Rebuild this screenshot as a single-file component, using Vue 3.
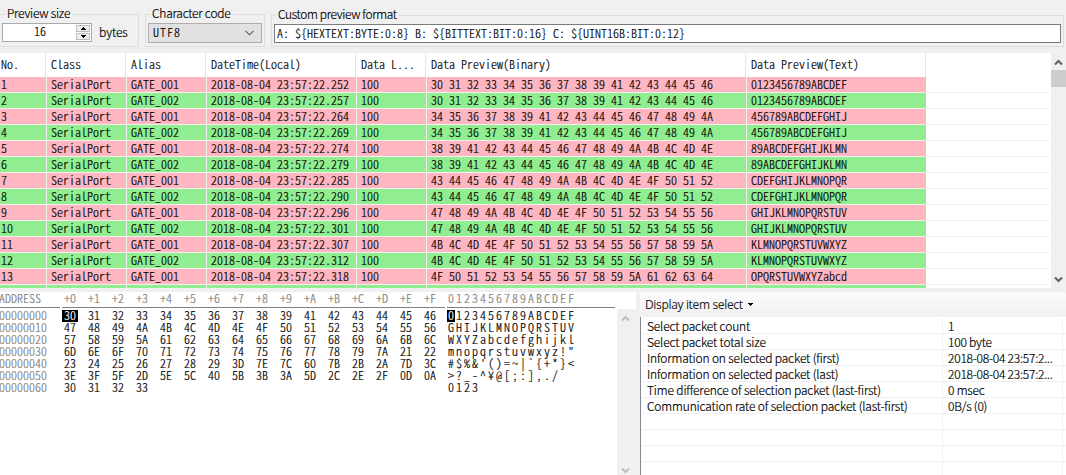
<script setup>
const CHARS = '0123456789ABCDEFGHIJKLMNOPQRSTUVWXYZabcdefghijklmnopqrstuvwxyz'
const hex = (s) => [...s].map((c) => c.charCodeAt(0).toString(16).toUpperCase()).join(' ')
const millis = ['252', '257', '264', '269', '274', '279', '285', '290', '296', '301', '307', '312', '318']
const rows = millis.map((ms, i) => {
  const start = Math.floor(i / 2) * 4
  const text = CHARS.slice(start, start + 16)
  return [String(i + 1), 'SerialPort', i % 2 ? 'GATE_002' : 'GATE_001', `2018-08-04 23:57:22.${ms}`, '100', hex(text), text]
})
const headers = ['No.', 'Class', 'Alias', 'DateTime(Local)', 'Data L...', 'Data Preview(Binary)', 'Data Preview(Text)']
const offsets = [...'0123456789ABCDEF'].map((c) => '+' + c)
const dump = [
  ['30 31 32 33 34 35 36 37 38 39 41 42 43 44 45 46', '0123456789ABCDEF'],
  ['47 48 49 4A 4B 4C 4D 4E 4F 50 51 52 53 54 55 56', 'GHIJKLMNOPQRSTUV'],
  ['57 58 59 5A 61 62 63 64 65 66 67 68 69 6A 6B 6C', 'WXYZabcdefghijkl'],
  ['6D 6E 6F 70 71 72 73 74 75 76 77 78 79 7A 21 22', 'mnopqrstuvwxyz!"'],
  ['23 24 25 26 27 28 29 3D 7E 7C 60 7B 2B 2A 7D 3C', "#$%&'()=~|`{+*}<"],
  ['3E 3F 5F 2D 5E 5C 40 5B 3B 3A 5D 2C 2E 2F 0D 0A', '>?_-^¥@[;:],./'],
  ['30 31 32 33', '0123'],
].map(([bytes, text], i) => ({ address: `000000${i}0`, bytes: bytes.split(' '), text: [...text] }))
const info = [
  ['Select packet count', '1'],
  ['Select packet total size', '100 byte'],
  ['Information on selected packet (first)', '2018-08-04 23:57:2...'],
  ['Information on selected packet (last)', '2018-08-04 23:57:2...'],
  ['Time difference of selection packet (last-first)', '0 msec'],
  ['Communication rate of selection packet (last-first)', '0B/s (0)'],
  ['', ''], ['', ''], ['', ''], ['', ''],
]
</script>

<template>
  <div class="window">
    <header class="options">
      <section class="group size">
        <span class="legend">Preview size</span>
        <div class="controls">
          <div class="spinner">
            <span class="value mono">16</span>
            <div class="buttons">
              <i><svg width="5" height="3"><path d="M2 0h1v1h1v1h1v1H0V2h1V1h1z" /></svg></i>
              <i><svg width="5" height="3"><path d="M0 0h5v1H4v1H3v1H2V2H1V1H0z" /></svg></i>
            </div>
          </div>
          <span class="unit">bytes</span>
        </div>
      </section>
      <section class="group code">
        <span class="legend">Character code</span>
        <div class="combo mono">
          <span>UTF8</span>
          <svg width="9" height="6"><path d="M.5 .8l4 4 4-4" fill="none" stroke="#555" stroke-width="1.1" /></svg>
        </div>
      </section>
      <section class="group format">
        <span class="legend">Custom preview format</span>
        <div class="field mono">A: ${HEXTEXT:BYTE:0:8} B: ${BITTEXT:BIT:0:16} C: ${UINT16B:BIT:0:12}</div>
      </section>
    </header>

    <main class="packets">
      <div class="list mono">
        <div class="row head"><span v-for="h in headers" :key="h">{{ h }}</span></div>
        <div v-for="(r, i) in rows" :key="i" class="row" :class="i % 2 ? 'green' : 'pink'">
          <span v-for="(c, j) in r" :key="j">{{ c }}</span>
        </div>
        <div class="row green"><span v-for="h in headers" :key="h"></span></div>
      </div>
      <div class="scroll">
        <svg class="arrow" width="9" height="7"><path d="M1 5.5l3.5-3.5L8 5.5" /></svg>
        <div class="thumb"></div>
        <svg class="arrow down" width="9" height="7"><path d="M1 1.5l3.5 3.5L8 1.5" /></svg>
      </div>
    </main>

    <div class="bottom">
      <section class="dump mono">
        <div class="line titles">
          <span class="addr">ADDRESS</span>
          <div class="bytes"><span v-for="o in offsets" :key="o">{{ o }}</span></div>
          <div class="ascii"><span v-for="c in '0123456789ABCDEF'" :key="c">{{ c }}</span></div>
        </div>
        <div class="body">
          <div class="lines">
            <div v-for="(d, i) in dump" :key="i" class="line">
              <span class="addr">{{ d.address }}</span>
              <div class="bytes"><span v-for="(b, j) in d.bytes" :key="j" :class="{ sel: !i && !j }">{{ b }}</span></div>
              <div class="ascii"><span v-for="(c, j) in d.text" :key="j" :class="{ sel: !i && !j }">{{ c }}</span></div>
            </div>
          </div>
          <div class="scroll pale">
            <svg class="arrow" width="9" height="7"><path d="M1 5.5l3.5-3.5L8 5.5" /></svg>
            <svg class="arrow down" width="9" height="7"><path d="M1 1.5l3.5 3.5L8 1.5" /></svg>
          </div>
        </div>
      </section>
      <section class="info">
        <div class="toolbar">Display item select <svg width="5" height="3"><path d="M0 0h5v1H4v1H3v1H2V2H1V1H0z" /></svg></div>
        <div class="grid">
          <div v-for="(r, i) in info" :key="i" class="pair">
            <span class="name">{{ r[0] }}</span><span class="val">{{ r[1] }}</span>
          </div>
        </div>
      </section>
    </div>
  </div>
</template>

<style>
body { margin: 0; overflow: hidden; }
</style>

<style scoped>
* { box-sizing: border-box; }
.window { width: 1066px; height: 475px; overflow: hidden; display: flex; flex-direction: column; background: #f0f0f0; color: #000; font: 300 12px/16px "Noto Sans CJK JP", sans-serif; white-space: pre; -webkit-text-stroke: 0.2px; }
.mono { font-feature-settings: "hwid" 1; font-kerning: none; }
svg { display: block; flex: none; }

.options { height: 53px; flex: none; display: flex; align-items: flex-start; padding-top: 14px; }
.group { height: 33px; border: 1px solid #dcdcdc; flex: none; }
.legend { display: block; width: max-content; height: 16px; line-height: 14px; padding: 0 2px; margin: -9px 0 0 4px; background: #f0f0f0; letter-spacing: -0.22px; }
.size { width: 139px; border-left: 0; margin-right: 6px; }
.size .legend { margin-left: 5px; }
.controls { display: flex; margin: 1px 0 0 2px; }
.spinner { width: 90px; height: 19px; display: flex; border: 1px solid #aaa; background: #fff; padding: 1px; }
.value { flex: 1; text-align: center; line-height: 12px; }
.buttons { width: 14px; display: flex; flex-direction: column; gap: 1px; }
.buttons i { flex: 1; display: flex; align-items: center; justify-content: center; background: #eee; border: 1px solid #bbb; }
.unit { margin-left: 7px; line-height: 18px; letter-spacing: -0.1px; }
.code { width: 120px; margin-right: 6px; }
.combo { display: flex; align-items: center; justify-content: space-between; width: 114px; height: 20px; margin: 1px 0 0 2px; padding: 0 7px 1px 4px; background: #e1e1e1; border: 1px solid #adadad; }
.combo span { letter-spacing: 1px; line-height: 14px; padding-bottom: 1px; }
.format { width: 793px; height: 32px; margin-top: 1px; }
.format .legend { letter-spacing: -0.36px; }
.field { width: 787px; height: 19px; line-height: 15px; margin: 1px 0 0 2px; padding-left: 2px; border: 1px solid #7a7a7a; background: #fff; }

.packets { height: 235px; flex: none; display: flex; }
.list { width: 1051px; overflow: hidden; background: #fff; }
.row { display: grid; grid-template-columns: 47px 80px 80px 150px 70px 320px 180px; width: 1050px; height: 16px; line-height: 13px; border-bottom: 1px solid #f0f0f0; }
.row span { padding-left: 4px; border-right: 1px solid #f0f0f0; }
.row span:first-child { padding-left: 1px; }
.row span:last-child { border-right: 0; width: 179px; }
.head { height: 24px; line-height: 22px; border-bottom: 0; grid-template-columns: 46px 80px 80px 150px 70px 320px 180px; }
.head span { border-color: #e5e5e5; padding-left: 5px; }
.head span:last-child { border-right: 1px solid #e5e5e5; width: 180px; }
.pink span { background: #ffb6c1; }
.green span { background: #90ee90; }

.scroll { width: 15px; flex: none; display: flex; flex-direction: column; align-items: center; background: #f0f0f0; padding: 6px 0 5px; }
.arrow path { fill: none; stroke: #606060; stroke-width: 2; }
.thumb { width: 15px; height: 17px; margin-top: 4px; background: #cdcdcd; }
.down { margin-top: auto; }

.bottom { flex: 1; min-height: 0; display: flex; padding-top: 4px; }
.dump { width: 636px; margin-right: 4px; background: #fff; display: flex; flex-direction: column; }
.line { display: flex; gap: 2px; height: 12px; line-height: 10px; }
.addr { width: 60px; color: #808080; text-indent: -1px; }
.bytes { width: 383px; display: flex; flex: none; }
.bytes span { width: 16px; margin-right: 8px; padding-left: 2px; flex: none; }
.ascii { width: 168px; display: flex; }
.ascii span { width: 8px; padding-left: 1px; }
.titles { height: 16px; line-height: 12px; flex: none; color: #808080; }
.titles > * { border-bottom: 1px solid #808080; height: 16px; }
.line .sel { background: #000; color: #fff; }
.body { flex: 1; display: flex; padding-top: 1px; }
.lines { flex: 1; padding-top: 1px; }
.pale { width: 19px; padding-right: 2px; padding-bottom: 1px; }
.pale .arrow path { stroke: #bfbfbf; }

.info { flex: 1; display: flex; flex-direction: column; }
.toolbar { display: flex; align-items: center; height: 25px; flex: none; padding-left: 5px; font-family: "Open Sans", sans-serif; font-weight: 400; letter-spacing: -0.34px; -webkit-text-stroke: 0; color: #1e1e1e; background: linear-gradient(#fcfcfc, #f0f0f0); border-top-left-radius: 2px; border-top-right-radius: 3px; }
.toolbar svg { margin-left: 3px; }
.grid { flex: 1; min-height: 0; overflow: hidden; background: #fff; border-left: 1px solid #828790; padding: 1px 0 0 1px; letter-spacing: -0.15px; }
.pair { display: flex; height: 16px; line-height: 15px; border-bottom: 1px solid #f0f0f0; }
.name { width: 301px; padding-left: 5px; border-right: 1px solid #f0f0f0; }
.val { width: 120px; padding-left: 5px; border-right: 1px solid #f0f0f0; letter-spacing: -0.22px; }
</style>
